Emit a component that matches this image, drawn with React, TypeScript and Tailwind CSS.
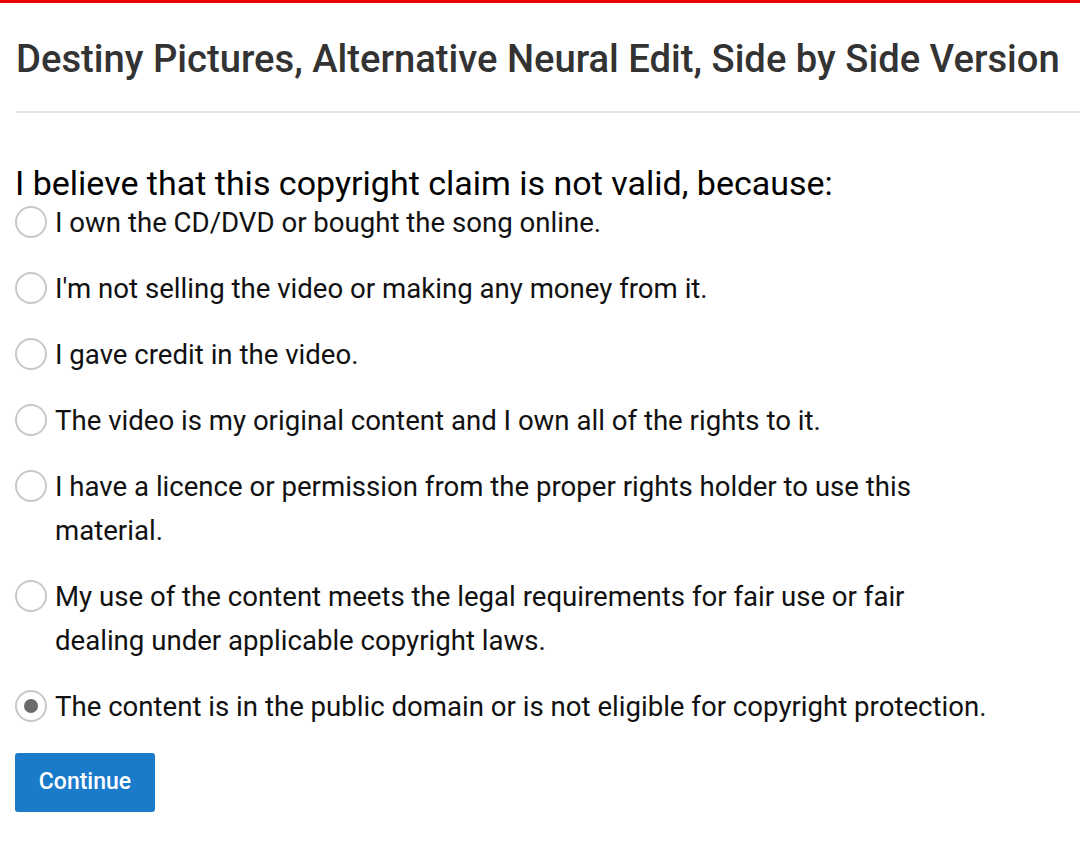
import React from "react";

const options = [
  "I own the CD/DVD or bought the song online.",
  "I'm not selling the video or making any money from it.",
  "I gave credit in the video.",
  "The video is my original content and I own all of the rights to it.",
  "I have a licence or permission from the proper rights holder to use this material.",
  "My use of the content meets the legal requirements for fair use or fair dealing under applicable copyright laws.",
  "The content is in the public domain or is not eligible for copyright protection.",
];

function Radio({ checked }: { checked: boolean }) {
  return (
    <span className="mt-[-2px] flex h-[32px] w-[32px] shrink-0 items-center justify-center rounded-full border-2 border-[#c8c8c8] bg-white">
      {checked && <span className="h-[14px] w-[14px] rounded-full bg-[#6b6b6b]" />}
    </span>
  );
}

export default function App() {
  return (
    <div className="min-h-[867px] w-[1080px] bg-white" style={{ fontFamily: "Roboto, 'Noto Sans', sans-serif" }}>
      <div className="h-[3px] bg-[#e80000]" />
      <div className="pl-[16px]">
        <h1 className="pt-[34px] pb-[30px] text-[38.2px] font-medium leading-[44px] text-[#333333]">
          Destiny Pictures, Alternative Neural Edit, Side by Side Version
        </h1>
        <div className="h-[2px] bg-[#e3e3e3]" />
      </div>
      <div className="pl-[15px] pr-[88px] pt-[52px]">
        <p className="text-[34px] leading-[36px] text-black">
          I believe that this copyright claim is not valid, because:
        </p>
        <div className="flex flex-col gap-[22px]">
          {options.map((o, i) => (
            <label key={i} className="flex items-start gap-[8px]">
              <span className="flex h-[44px] items-center">
                <Radio checked={i === options.length - 1} />
              </span>
              <span className="text-[27.6px] leading-[44px] text-[#111]">{o}</span>
            </label>
          ))}
        </div>
        <button className="mt-[24px] h-[59px] w-[140px] rounded-[3px] bg-[#1a7bcb] text-[23px] font-medium text-white">
          Continue
        </button>
      </div>
    </div>
  );
}
